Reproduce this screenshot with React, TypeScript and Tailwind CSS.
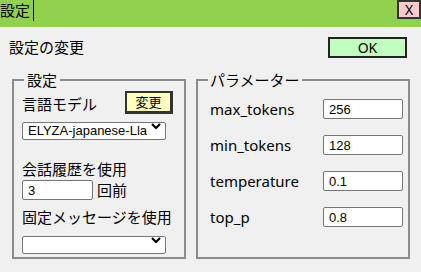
import React from "react";

const font = { fontFamily: '"Noto Sans", "Noto Sans CJK JP", sans-serif' };

function Chevron() {
  return (
    <svg width="10" height="7" viewBox="0 0 10 7" className="pointer-events-none absolute right-[5px] top-1/2 -translate-y-1/2">
      <path d="M1 1.5 L5 5.5 L9 1.5" fill="none" stroke="#000" strokeWidth="2.2" />
    </svg>
  );
}

function Select({ value }: { value: string }) {
  return (
    <div className="relative w-[144px] h-[18px]">
      <select
        defaultValue={value}
        className="appearance-none w-full h-full border border-[#767676] rounded-[2px] bg-white pl-[5px] pr-[18px] text-[13px] leading-[16px] text-black outline-none"
        style={{ fontFamily: '"Liberation Sans", Arial, sans-serif' }}
      >
        <option value={value}>{value}</option>
      </select>
      <Chevron />
    </div>
  );
}

function Field({ value, w }: { value: string; w: string }) {
  return (
    <input
      defaultValue={value}
      className={`${w} h-[20px] border border-[#767676] rounded-[2px] bg-white pl-[5px] text-[13px] text-black outline-none`}
      style={{ fontFamily: '"Liberation Sans", Arial, sans-serif' }}
    />
  );
}

const params = [
  { label: "max_tokens", value: "256" },
  { label: "min_tokens", value: "128" },
  { label: "temperature", value: "0.1" },
  { label: "top_p", value: "0.8" },
];

export default function App() {
  return (
    <div className="w-[421px] h-[272px] bg-[#f0f0f0] overflow-hidden text-black" style={font}>
      {/* title bar */}
      <div className="h-[27px] bg-[#92d050] flex items-start justify-between">
        <div className="flex items-start">
          <span className="text-[15px] leading-[20px]">設定</span>
          <span className="w-px h-[21px] bg-black ml-[3px]" />
        </div>
        <button className="w-[24px] h-[19px] bg-[#ffcaca] border-2 border-[#333] text-[14px] leading-[15px] flex items-center justify-center">
          X
        </button>
      </div>

      {/* header */}
      <div className="mt-[10px] pl-[9px] pr-[14px] flex items-center justify-between">
        <span className="text-[15px] leading-[21px]">設定の変更</span>
        <button className="w-[79px] h-[21px] border-2 border-[#222] bg-[#c0ffc0] text-[14px] leading-[17px]">
          OK
        </button>
      </div>

      {/* fieldsets */}
      <div className="mt-[12px] pl-[12px] flex gap-[10px]">
        <fieldset className="w-[174px] h-[189px] border-2 border-[#8c8c8c] pl-[8px] pr-[11px] pt-[1px]">
          <legend className="text-[15px] leading-[20px] px-[3px] ml-[2px]">設定</legend>
          <div className="flex items-end justify-between">
            <span className="text-[15px] leading-[20px]">言語モデル</span>
            <button className="w-[48px] h-[23px] bg-[#ffffc0] border-2 border-[#333] border-r-[3px] border-b-[3px] text-[13px] leading-[16px]">
              変更
            </button>
          </div>
          <div className="mt-[3px]">
            <Select value="ELYZA-japanese-Llama-2-7b-instruct" />
          </div>
          <div className="mt-[24px] text-[15px] leading-[20px]">会話履歴を使用</div>
          <div className="mt-[1px] flex items-center gap-[4px]">
            <Field value="3" w="w-[71px]" />
            <span className="text-[15px] leading-[20px]">回前</span>
          </div>
          <div className="mt-[7px] text-[15px] leading-[20px]">固定メッセージを使用</div>
          <div className="mt-[4px]">
            <Select value="" />
          </div>
        </fieldset>

        <fieldset className="w-[214px] h-[189px] border-2 border-[#8c8c8c] pl-[12px] pr-[5px] pt-[9px]">
          <legend className="text-[15px] leading-[20px] px-[2px] -ml-[2px]">パラメーター</legend>
          <div className="flex flex-col gap-[16px]">
            {params.map((p) => (
              <div key={p.label} className="flex items-center justify-between h-[20px]">
                <span className="text-[15px] leading-[20px]">{p.label}</span>
                <Field value={p.value} w="w-[80px]" />
              </div>
            ))}
          </div>
        </fieldset>
      </div>
    </div>
  );
}
